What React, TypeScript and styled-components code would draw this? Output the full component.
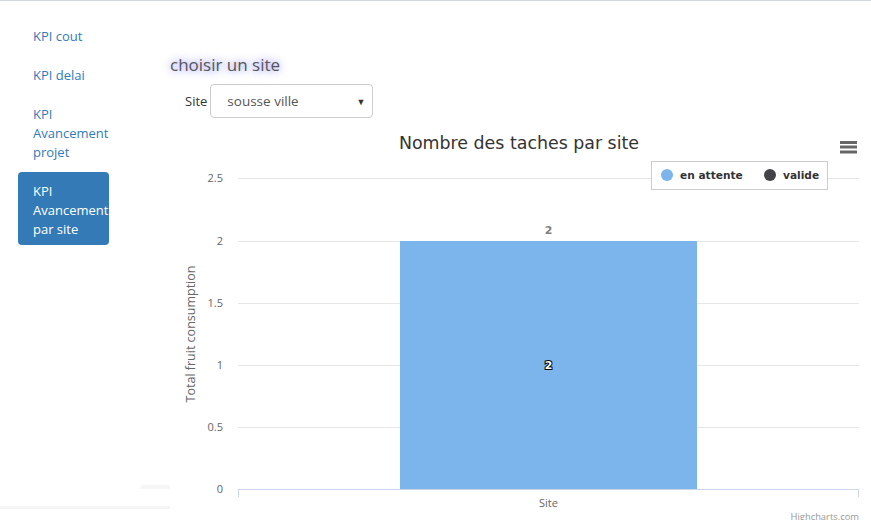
import React from "react";
import styled, { createGlobalStyle } from "styled-components";

const Global = createGlobalStyle`
  html, body { margin: 0; padding: 0; background: #fff; }
  body { font-family: "Open Sans", "Liberation Sans", sans-serif; color: #333; }
  * { box-sizing: border-box; }
`;

const Page = styled.div`
  width: 871px;
  height: 520px;
  overflow: hidden;
  border-top: 1px solid #d3d8dc;
  display: flex;
`;

const Sidebar = styled.aside`
  width: 170px;
  flex: none;
  display: flex;
  flex-direction: column;
  padding-top: 16px;
`;

const Nav = styled.ul`
  list-style: none;
  margin: 0 0 0 18px;
  padding: 0;
  width: 91px;
  display: flex;
  flex-direction: column;
  gap: 4px;
`;

const NavLink = styled.a<{ $active?: boolean }>`
  display: block;
  padding: 10px 15px 6px;
  font-size: 13px;
  line-height: 19px;
  border-radius: 4px;
  text-decoration: none;
  white-space: normal;
  overflow: visible;
  color: ${(p) => (p.$active ? "#fff" : "#337ab7")};
  background: ${(p) => (p.$active ? "#337ab7" : "transparent")};
`;

const Spacer = styled.div`
  flex: 1;
`;

const Ledge = styled.div`
  margin-left: 140px;
  height: 4px;
  background: #f6f6f6;
  border-top-left-radius: 4px;
`;

const Strip = styled.div`
  margin-top: 17px;
  margin-bottom: 11px;
  height: 3px;
  background: #f5f5f5;
`;

const Main = styled.main`
  flex: 1;
  padding-top: 52px;
  display: flex;
  flex-direction: column;
`;

const Heading = styled.h4`
  margin: 0;
  font-size: 17px;
  line-height: 23px;
  font-weight: 400;
  color: #555;
  text-shadow: 0 0 8px #6b6bff;
`;

const FormRow = styled.div`
  margin-top: 8px;
  padding-left: 15px;
  display: flex;
  align-items: center;
  gap: 3px;
`;

const Label = styled.label`
  font-size: 13px;
  color: #333;
`;

const SelectBox = styled.div`
  width: 163px;
  height: 34px;
  border: 1px solid #ccc;
  border-radius: 4px;
  display: flex;
  align-items: center;
  justify-content: space-between;
  padding: 0 7px 0 16px;
  font-size: 13.5px;
  color: #555;
  background: #fff;
`;

const Arrow = styled.span`
  font-size: 9px;
  color: #333;
`;

const ChartSvg = styled.svg`
  display: block;
  margin-top: 7px;
  flex: none;
`;

const gridYs = [178, 241, 303, 365, 427];
const labels: [string, number][] = [
  ["2.5", 178],
  ["2", 241],
  ["1.5", 303],
  ["1", 365],
  ["0.5", 427],
  ["0", 489],
];

const axisFont = `"Open Sans", "Liberation Sans", sans-serif`;
const hcFont = `"DejaVu Sans", Verdana, sans-serif`;

function Chart() {
  return (
    <ChartSvg width={701} height={395} viewBox="170 125 701 395">
      <text x={519} y={149} textAnchor="middle" fontFamily={hcFont} fontSize={17.4} fill="#333">
        Nombre des taches par site
      </text>
      <g stroke="#666" strokeWidth={3}>
        <line x1={840} x2={857} y1={142.5} y2={142.5} />
        <line x1={840} x2={857} y1={147} y2={147} />
        <line x1={840} x2={857} y1={152} y2={152} />
      </g>
      {gridYs.map((y) => (
        <line key={y} x1={238} x2={859} y1={y + 0.5} y2={y + 0.5} stroke="#e6e6e6" strokeWidth={1} />
      ))}
      <rect x={400} y={241} width={297} height={248} fill="#7cb5ec" />
      <line x1={238} x2={859} y1={489.5} y2={489.5} stroke="#ccd6eb" strokeWidth={1} />
      <line x1={238.5} x2={238.5} y1={489} y2={497} stroke="#ccd6eb" strokeWidth={1} />
      <line x1={858.5} x2={858.5} y1={489} y2={497} stroke="#ccd6eb" strokeWidth={1} />
      {labels.map(([t, y]) => (
        <text key={t} x={223} y={y + 4} textAnchor="end" fontFamily={axisFont} fontSize={11} fill="#666">
          {t}
        </text>
      ))}
      <text
        transform="translate(195,334) rotate(-90)"
        textAnchor="middle"
        fontFamily={axisFont}
        fontSize={12.5}
        fill="#666"
      >
        Total fruit consumption
      </text>
      <rect x={651.5} y={161.5} width={176} height={28} fill="#fff" stroke="#ccc" strokeWidth={1} />
      <circle cx={667} cy={175} r={6} fill="#7cb5ec" />
      <text x={680} y={179} fontFamily={hcFont} fontSize={10.6} fontWeight={700} fill="#333">
        en attente
      </text>
      <circle cx={770} cy={175} r={6} fill="#434348" />
      <text x={783} y={179} fontFamily={hcFont} fontSize={10.6} fontWeight={700} fill="#333">
        valide
      </text>
      <text x={548.5} y={234} textAnchor="middle" fontFamily={hcFont} fontSize={11} fontWeight={700} fill="#808080">
        2
      </text>
      <text
        x={548.5}
        y={369}
        textAnchor="middle"
        fontFamily={hcFont}
        fontSize={11}
        fontWeight={700}
        fill="#fff"
        stroke="#000"
        strokeWidth={2}
        paintOrder="stroke"
      >
        2
      </text>
      <text x={548.5} y={507} textAnchor="middle" fontFamily={axisFont} fontSize={11} fill="#666">
        Site
      </text>
      <text x={859} y={520} textAnchor="end" fontFamily={axisFont} fontSize={9.4} fill="#999">
        Highcharts.com
      </text>
    </ChartSvg>
  );
}

export default function App() {
  const items = ["KPI cout", "KPI delai", "KPI Avancement projet", "KPI Avancement par site"];
  return (
    <>
      <Global />
      <Page>
        <Sidebar>
          <Nav>
            {items.map((t, i) => (
              <li key={t}>
                <NavLink href="#" $active={i === 3}>
                  {t}
                </NavLink>
              </li>
            ))}
          </Nav>
          <Spacer />
          <Ledge />
          <Strip />
        </Sidebar>
        <Main>
          <Heading>choisir un site</Heading>
          <FormRow>
            <Label>Site</Label>
            <SelectBox>
              <span>sousse ville</span>
              <Arrow>▼</Arrow>
            </SelectBox>
          </FormRow>
          <Chart />
        </Main>
      </Page>
    </>
  );
}
